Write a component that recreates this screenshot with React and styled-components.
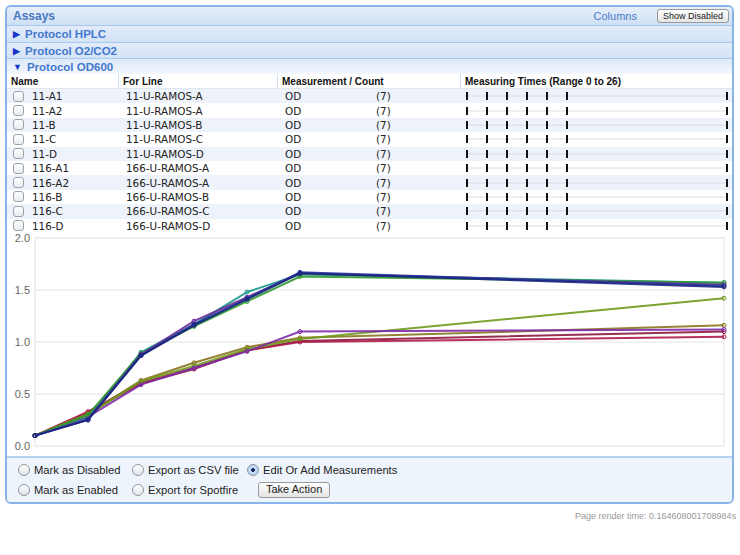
import React from "react";
import styled, { createGlobalStyle } from "styled-components";

const GlobalStyle = createGlobalStyle`
  html, body {
    margin: 0;
    padding: 0;
    background: #fff;
    overflow: hidden;
  }
  body {
    font-family: "Liberation Sans", Arial, sans-serif;
  }
`;

const Page = styled.div`
  padding: 5px 6px 0 5px;
  width: 740px;
  box-sizing: border-box;
`;

const Panel = styled.div`
  border: 2px solid #88b4ea;
  border-radius: 6px;
  overflow: hidden;
  background: #fff;
`;

const HeaderBar = styled.div`
  height: 18px;
  display: flex;
  align-items: center;
  padding: 0 3px 0 6px;
  background: linear-gradient(#e6eefa, #cfe0f5);
  border-bottom: 1px solid #a9c8ee;
`;

const Title = styled.div`
  flex: 1;
  font-weight: bold;
  font-size: 12px;
  color: #4a78c2;
`;

const LinkText = styled.span`
  font-size: 11px;
  color: #4a7cc8;
  margin-right: 20px;
`;

const SmallButton = styled.button`
  font-family: "Liberation Sans", Arial, sans-serif;
  font-size: ${(p) => p.$size || 9}px;
  color: #222;
  height: ${(p) => p.$h || 14}px;
  padding: 0 ${(p) => p.$pad || 5}px;
  border: 1px solid #9a9a9a;
  border-radius: 3px;
  background: linear-gradient(#ffffff, #e4e4e4);
  line-height: 1;
`;

const ProtocolRow = styled.div`
  height: ${(p) => p.$h}px;
  display: flex;
  align-items: center;
  gap: 5px;
  padding-left: 6px;
  font-size: 11.5px;
  font-weight: bold;
  color: #4377cf;
  background: ${(p) =>
    p.$open
      ? "linear-gradient(#dde9f8, #f3f7fd)"
      : "linear-gradient(#e3ecf9, #d3e3f6)"};
  border-bottom: ${(p) => (p.$open ? "none" : "1px solid #a9c8ee")};
`;

const Arrow = styled.span`
  color: #1537c9;
  font-size: 9px;
`;

const Grid = styled.div`
  display: grid;
  grid-template-columns: 111px 159px 183px 1fr;
`;

const HeadCell = styled.div`
  height: 15px;
  display: flex;
  align-items: center;
  padding-left: 4px;
  font-size: 10px;
  font-weight: bold;
  color: #111;
  background: #fff;
  border-left: ${(p) => (p.$first ? "none" : "1px solid #cfdcec")};
  border-bottom: 1px solid #dde6f1;
  box-sizing: border-box;
`;

const Row = styled.div`
  display: contents;
  & > div {
    background: ${(p) => (p.$odd ? "#eef3fb" : "#fff")};
  }
`;

const Cell = styled.div`
  height: 14.4px;
  display: flex;
  align-items: center;
  padding-left: ${(p) => p.$pl || 0}px;
  font-family: "DejaVu Sans", Verdana, sans-serif;
  font-size: 10.4px;
  color: #222;
  gap: 8px;
`;

const Measure = styled.span`
  width: 83px;
`;

const Check = styled.span`
  width: 11px;
  height: 11px;
  border: 1px solid #9aa3ad;
  border-radius: 3px;
  background: linear-gradient(#ffffff, #e8ebef);
  box-sizing: border-box;
`;

const ChartArea = styled.div`
  height: 223px;
  background: #fff;
`;

const Toolbar = styled.div`
  height: 44px;
  background: #eef4fc;
  border-top: 2px solid #b6d0f1;
  display: grid;
  grid-template-columns: 114px 115px auto;
  grid-template-rows: 20px 20px;
  align-content: center;
  padding-left: 11px;
`;

const Option = styled.label`
  display: flex;
  align-items: center;
  gap: 4px;
  font-size: 11.2px;
  color: #222;
  white-space: nowrap;
`;

const Radio = styled.span`
  width: 12px;
  height: 12px;
  border-radius: 50%;
  border: 1px solid #8f969e;
  background: ${(p) =>
    p.$on
      ? "radial-gradient(circle, #1a2a5a 0 1.6px, #cfe2fa 2.2px, #9cc3f0 100%)"
      : "linear-gradient(#ffffff, #e2e4e8)"};
  box-sizing: border-box;
`;

const ActionCell = styled.div`
  display: flex;
  align-items: center;
  padding-left: 11px;
`;

const Footer = styled.div`
  margin: 7px 0 0 570px;
  white-space: nowrap;
  font-size: 9px;
  color: #999;
`;

const rows = [
  ["11-A1", "11-U-RAMOS-A"],
  ["11-A2", "11-U-RAMOS-A"],
  ["11-B", "11-U-RAMOS-B"],
  ["11-C", "11-U-RAMOS-C"],
  ["11-D", "11-U-RAMOS-D"],
  ["116-A1", "166-U-RAMOS-A"],
  ["116-A2", "166-U-RAMOS-A"],
  ["116-B", "166-U-RAMOS-B"],
  ["116-C", "166-U-RAMOS-C"],
  ["116-D", "166-U-RAMOS-D"],
];

const times = [0, 2, 4, 6, 8, 10, 26];

const TimeLine = () => (
  <svg width="270" height="14">
    <line x1="7" y1="7" x2="267" y2="7" stroke="#d8dde3" strokeWidth="1" />
    {times.map((t) => (
      <rect key={t} x={6 + t * 10} y="3" width="2" height="8" fill="#111" />
    ))}
  </svg>
);

const series = [
  ["#8b1a3c", [0.1, 0.32, 0.6, 0.74, 0.92, 1.01, 1.1]],
  ["#b01a4c", [0.1, 0.33, 0.61, 0.75, 0.92, 1.0, 1.05]],
  ["#8a7420", [0.1, 0.31, 0.63, 0.8, 0.95, 1.04, 1.16]],
  ["#6e9a1c", [0.1, 0.3, 0.62, 0.77, 0.93, 1.03, 1.42]],
  ["#7e2aa8", [0.1, 0.28, 0.59, 0.75, 0.91, 1.1, 1.12]],
  ["#1a9a88", [0.1, 0.27, 0.9, 1.17, 1.48, 1.65, 1.57]],
  ["#2c9a2c", [0.1, 0.3, 0.89, 1.15, 1.39, 1.63, 1.57]],
  ["#6a2a9a", [0.1, 0.26, 0.88, 1.2, 1.43, 1.66, 1.55]],
  ["#2a3a9c", [0.1, 0.25, 0.87, 1.17, 1.42, 1.67, 1.54]],
  ["#1a2680", [0.1, 0.25, 0.87, 1.16, 1.41, 1.66, 1.53]],
];

const X0 = 28;
const XW = 26.5;
const Y0 = 213;
const YS = 104;
const px = (t) => X0 + t * XW;
const py = (v) => Y0 - v * YS;

const Chart = () => (
  <svg width="727" height="223">
    <rect x={X0} y={py(2)} width={689} height={YS * 2} fill="none" stroke="#ececec" strokeWidth="1.5" />
    {[0.5, 1, 1.5].map((v) => (
      <line key={v} x1={X0} x2={X0 + 689} y1={py(v)} y2={py(v)} stroke="#ececec" strokeWidth="1.5" />
    ))}
    {[0, 0.5, 1, 1.5, 2].map((v) => (
      <text
        key={v}
        x={X0 - 5}
        y={py(v) + 4}
        textAnchor="end"
        fontSize="11"
        fill="#666"
        fontFamily="Liberation Sans, Arial, sans-serif"
      >
        {v.toFixed(1)}
      </text>
    ))}
    {series.map(([c, vals], i) => (
      <g key={i}>
        <polyline
          points={vals.map((v, j) => `${px(times[j])},${py(v)}`).join(" ")}
          fill="none"
          stroke={c}
          strokeWidth="2"
          strokeOpacity="0.9"
        />
        {vals.map((v, j) => (
          <circle key={j} cx={px(times[j])} cy={py(v)} r="2" fill="none" stroke={c} strokeWidth="1" />
        ))}
      </g>
    ))}
  </svg>
);

export default function App() {
  return (
    <Page>
      <GlobalStyle />
      <Panel>
        <HeaderBar>
          <Title>Assays</Title>
          <LinkText>Columns</LinkText>
          <SmallButton>Show Disabled</SmallButton>
        </HeaderBar>
        <ProtocolRow $h={16}>
          <Arrow>▶</Arrow>Protocol HPLC
        </ProtocolRow>
        <ProtocolRow $h={15}>
          <Arrow>▶</Arrow>Protocol O2/CO2
        </ProtocolRow>
        <ProtocolRow $h={15} $open>
          <Arrow>▼</Arrow>Protocol OD600
        </ProtocolRow>
        <Grid>
          <HeadCell $first>Name</HeadCell>
          <HeadCell>For Line</HeadCell>
          <HeadCell>Measurement / Count</HeadCell>
          <HeadCell>Measuring Times (Range 0 to 26)</HeadCell>
          {rows.map(([name, line], i) => (
            <Row key={name} $odd={i % 2 === 0}>
              <Cell $pl={6}>
                <Check />
                {name}
              </Cell>
              <Cell $pl={8}>{line}</Cell>
              <Cell $pl={8}>
                <Measure>OD</Measure>(7)
              </Cell>
              <Cell>
                <TimeLine />
              </Cell>
            </Row>
          ))}
        </Grid>
        <ChartArea>
          <Chart />
        </ChartArea>
        <Toolbar>
          <Option>
            <Radio />
            Mark as Disabled
          </Option>
          <Option>
            <Radio />
            Export as CSV file
          </Option>
          <Option>
            <Radio $on />
            Edit Or Add Measurements
          </Option>
          <Option>
            <Radio />
            Mark as Enabled
          </Option>
          <Option>
            <Radio />
            Export for Spotfire
          </Option>
          <ActionCell>
            <SmallButton $size={11} $h={16} $pad={7}>
              Take Action
            </SmallButton>
          </ActionCell>
        </Toolbar>
      </Panel>
      <Footer>Page render time: 0.164608001708984s</Footer>
    </Page>
  );
}
